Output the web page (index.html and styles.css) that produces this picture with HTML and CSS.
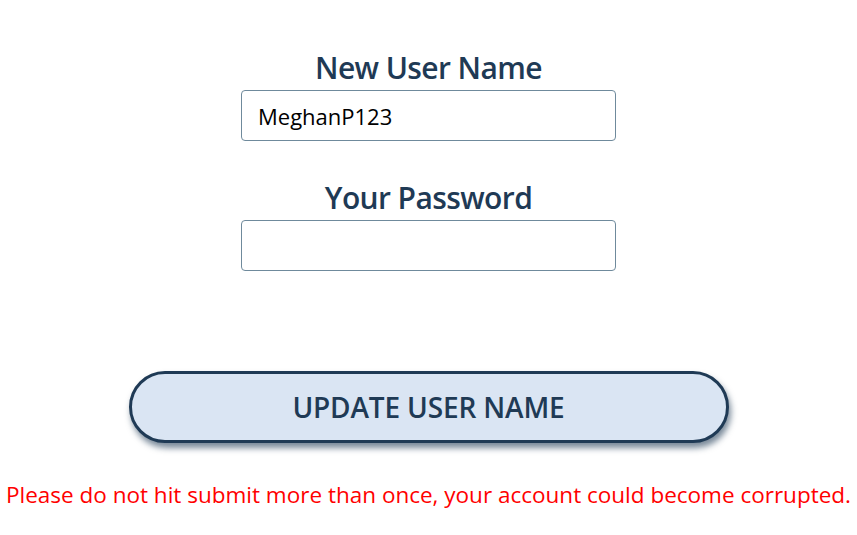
FILE: index.html
```html
<!DOCTYPE html>
<html>
<head>
<meta charset="utf-8">
<link rel="stylesheet" href="styles.css">
</head>
<body>
<div class="page">
  <form class="form">
    <label class="label" for="uname">New User Name</label>
    <input class="field" id="uname" type="text" value="MeghanP123">
    <label class="label label-second" for="pwd">Your Password</label>
    <input class="field" id="pwd" type="password">
  </form>
  <button class="submit" type="button">UPDATE USER NAME</button>
  <p class="warning">Please do not hit submit more than once, your account could become corrupted.</p>
</div>
</body>
</html>
```

FILE: styles.css
```css
html, body {
  margin: 0;
  padding: 0;
  background: #ffffff;
}
.page {
  display: flex;
  flex-direction: column;
  align-items: center;
  padding-top: 47px;
  font-family: "Open Sans", "Liberation Sans", sans-serif;
}
.form {
  display: flex;
  flex-direction: column;
  width: 375px;
  margin: 0;
}
.label {
  display: block;
  text-align: center;
  font-size: 30px;
  line-height: 41px;
  font-weight: 600;
  letter-spacing: -0.6px;
  color: #1f3a55;
  margin-bottom: 2px;
}
.label-second {
  margin-top: 36px;
}
.field {
  box-sizing: border-box;
  width: 375px;
  height: 51px;
  border: 1px solid #6f8a9c;
  border-radius: 4px;
  padding: 0 16px;
  font-family: "Open Sans", "Liberation Sans", sans-serif;
  font-size: 22px;
  color: #000000;
  background: #ffffff;
  outline: none;
}
.submit {
  box-sizing: border-box;
  margin-top: 100px;
  width: 600px;
  height: 72px;
  border: 3px solid #1f3a55;
  border-radius: 36px;
  background: #dae5f3;
  color: #1f3a55;
  font-family: "Open Sans", "Liberation Sans", sans-serif;
  font-size: 28px;
  font-weight: 600;
  letter-spacing: -0.15px;
  box-shadow: 2px 5px 6px rgba(31, 58, 85, 0.6);
  cursor: pointer;
}
.warning {
  margin: 37px 0 0;
  font-size: 22.5px;
  line-height: 30px;
  color: #ff0000;
  white-space: nowrap;
}
```
